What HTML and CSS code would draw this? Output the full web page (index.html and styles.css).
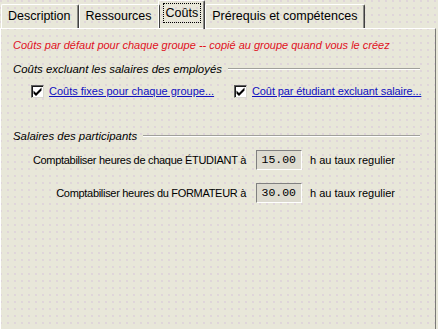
FILE: index.html
```html
<!DOCTYPE html>
<html>

<head>
    <meta charset="UTF-8">
    <title>Coûts</title>
    <link rel="stylesheet" href="styles.css">
</head>

<body>
    <div class="window">
        <div class="tabs">
            <div class="tab">Description</div>
            <div class="tab">Ressources</div>
            <div class="tab selected"><span class="focus">Coûts</span></div>
            <div class="tab">Prérequis et compétences</div>
        </div>
        <div class="panel">
            <p class="note">Coûts par défaut pour chaque groupe -- copié au groupe quand vous le créez</p>

            <div class="group-title">
                <span>Coûts excluant les salaires des employés</span>
                <div class="rule"></div>
            </div>
            <div class="checks">
                <label class="check">
                    <span class="box">
                        <svg width="9" height="9" viewBox="0 0 9 9"><path d="M0.5 3.5 L3 6 L8.5 0.5 L8.5 3.5 L3 9 L0.5 6.5 Z" fill="#000"/></svg>
                    </span>
                    <a href="#">Coûts fixes pour chaque groupe...</a>
                </label>
                <label class="check">
                    <span class="box">
                        <svg width="9" height="9" viewBox="0 0 9 9"><path d="M0.5 3.5 L3 6 L8.5 0.5 L8.5 3.5 L3 9 L0.5 6.5 Z" fill="#000"/></svg>
                    </span>
                    <a href="#">Coût par étudiant excluant salaire...</a>
                </label>
            </div>

            <div class="group-title second">
                <span>Salaires des participants</span>
                <div class="rule"></div>
            </div>
            <div class="hours">
                <div class="hours-row">
                    <span class="label">Comptabiliser heures de chaque ÉTUDIANT à</span>
                    <span class="field">15.00</span>
                    <span class="unit">h au taux regulier</span>
                </div>
                <div class="hours-row">
                    <span class="label">Comptabiliser heures du FORMATEUR à</span>
                    <span class="field">30.00</span>
                    <span class="unit">h au taux regulier</span>
                </div>
            </div>
        </div>
    </div>
</body>

</html>
```

FILE: styles.css
```css
body {
    margin: 0;
    font-family: "Liberation Sans", Arial, sans-serif;
    font-size: 11px;
    color: #000;
    background: #e8e7d9;
}

.window {
    width: 438px;
    height: 329px;
    display: flex;
    flex-direction: column;
    background-color: #e8e7d9;
    background-image: radial-gradient(circle at 1px 1px, #e0d6da 0.7px, transparent 1px);
    background-size: 7px 7px;
    overflow: hidden;
}

.tabs {
    display: flex;
    align-items: flex-end;
    height: 28px;
    padding-left: 1px;
    position: relative;
    z-index: 1;
    font-size: 12.5px;
}

.tab {
    height: 23px;
    line-height: 23px;
    padding: 0 7px 0 6px;
    border-top: 1px solid #fff;
    border-left: 1px solid #fff;
    border-right: 1px solid #404040;
    box-shadow: inset -1px 0 #8a8a86;
    border-radius: 2px 2px 0 0;
    white-space: nowrap;
}

.tab.selected {
    height: 28px;
    line-height: 24px;
    margin: 0 -1px -1px -2px;
    padding: 0 4px 0 5px;
    background: inherit;
}

.tab.selected + .tab {
    margin-left: 1px;
}

.focus {
    display: inline-block;
    line-height: 18px;
    padding: 0 2px;
    outline: 1px dotted #000;
}

.panel {
    flex: 1;
    border-top: 1px solid #fff;
    border-left: 1px solid #fff;
    border-right: 1px solid #7a7a76;
    width: 436px;
    padding: 9px 15px 0 12px;
    box-sizing: border-box;
}

.note {
    margin: 0;
    line-height: 14px;
    color: #e0101c;
    font-style: italic;
}

.group-title {
    display: flex;
    align-items: center;
    margin-top: 10px;
    line-height: 14px;
    font-size: 11.4px;
    font-style: italic;
}

.group-title.second {
    margin-top: 31px;
}

.rule {
    flex: 1;
    margin-left: 6px;
    border-top: 1px solid #a0a09a;
    border-bottom: 1px solid #fff;
}

.checks {
    display: grid;
    grid-template-columns: 203px auto;
    margin-top: 8px;
    padding-left: 18px;
}

.check {
    display: flex;
    align-items: center;
    gap: 5px;
    line-height: 14px;
    white-space: nowrap;
}

.box {
    width: 9px;
    height: 9px;
    padding: 1px;
    background: #fff;
    border-top: 1px solid #606060;
    border-left: 1px solid #606060;
    border-right: 1px solid #d8d8d0;
    border-bottom: 1px solid #d8d8d0;
    box-shadow: inset 1px 1px #1a1a1a;
    display: flex;
}

.check a {
    color: #1010c0;
    text-decoration: underline;
}

.check + .check a {
    letter-spacing: -0.1px;
}

.hours {
    display: flex;
    flex-direction: column;
    gap: 13px;
    margin-top: 7px;
}

.hours-row {
    display: grid;
    grid-template-columns: 238px 50px auto;
    align-items: center;
}

.label {
    text-align: right;
    padding-right: 5px;
    letter-spacing: -0.3px;
    white-space: nowrap;
}

.field {
    height: 20px;
    box-sizing: border-box;
    margin-left: 5px;
    margin-right: -1px;
    padding-right: 5px;
    line-height: 18px;
    text-align: right;
    font-family: "Liberation Mono", "Courier New", monospace;
    font-size: 11.5px;
    background: #dddbd0;
    border-top: 1px solid #808080;
    border-left: 1px solid #808080;
    border-right: 1px solid #fff;
    border-bottom: 1px solid #fff;
}

.unit {
    padding-left: 9px;
}
```
